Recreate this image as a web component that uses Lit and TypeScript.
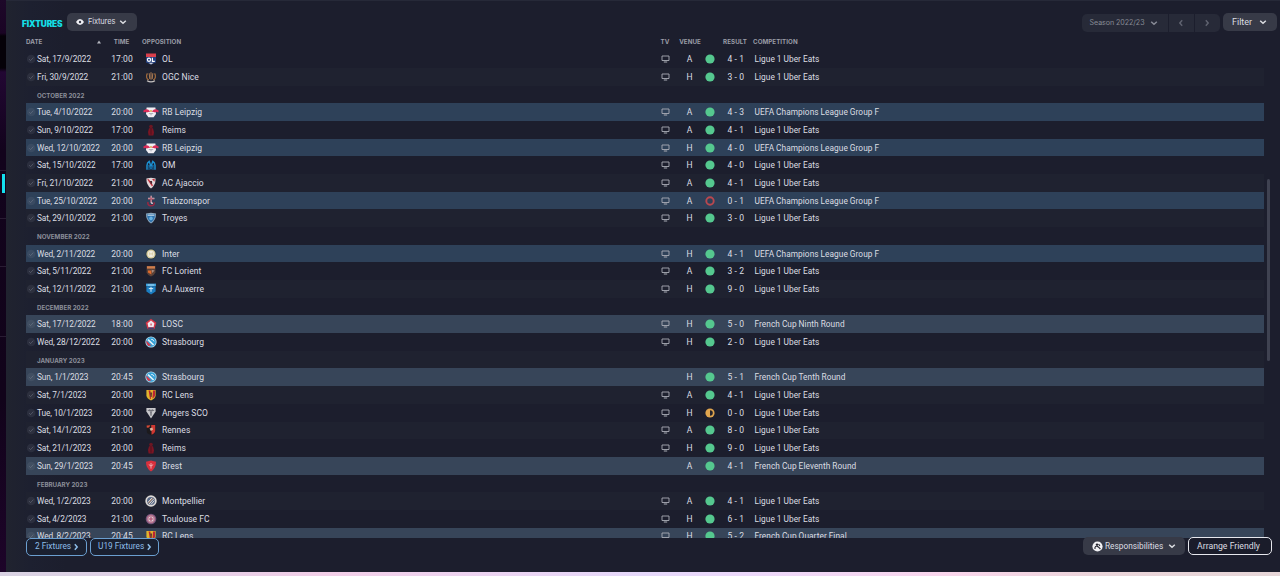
import { LitElement, html, css, svg, TemplateResult, SVGTemplateResult } from "lit";
import { customElement, property } from "lit/decorators.js";
import { classMap } from "lit/directives/class-map.js";

type Outcome = "win" | "loss" | "draw";
type Kind = "league" | "europe" | "cup";

interface Fixture {
  date: string;
  time: string;
  team: string;
  tv: boolean;
  venue: "A" | "H";
  outcome: Outcome;
  result: string;
  competition: string;
  kind: Kind;
}

interface Month {
  month: string;
}

const league = (
  date: string,
  time: string,
  team: string,
  venue: "A" | "H",
  result: string,
  outcome: Outcome = "win",
): Fixture => ({
  date, time, team, venue, result, outcome, tv: true, competition: "Ligue 1 Uber Eats", kind: "league",
});

const europe = (
  date: string,
  team: string,
  venue: "A" | "H",
  result: string,
  outcome: Outcome = "win",
): Fixture => ({
  date, time: "20:00", team, venue, result, outcome, tv: true,
  competition: "UEFA Champions League Group F", kind: "europe",
});

const cup = (
  date: string,
  time: string,
  team: string,
  venue: "A" | "H",
  result: string,
  round: string,
  tv: boolean,
): Fixture => ({
  date, time, team, venue, result, outcome: "win", tv, competition: `French Cup ${round}`, kind: "cup",
});

const ROWS: (Fixture | Month)[] = [
  league("Sat, 17/9/2022", "17:00", "OL", "A", "4 - 1"),
  league("Fri, 30/9/2022", "21:00", "OGC Nice", "H", "3 - 0"),
  { month: "October 2022" },
  europe("Tue, 4/10/2022", "RB Leipzig", "A", "4 - 3"),
  league("Sun, 9/10/2022", "17:00", "Reims", "A", "4 - 1"),
  europe("Wed, 12/10/2022", "RB Leipzig", "H", "4 - 0"),
  league("Sat, 15/10/2022", "17:00", "OM", "H", "4 - 0"),
  league("Fri, 21/10/2022", "21:00", "AC Ajaccio", "A", "4 - 1"),
  europe("Tue, 25/10/2022", "Trabzonspor", "A", "0 - 1", "loss"),
  league("Sat, 29/10/2022", "21:00", "Troyes", "H", "3 - 0"),
  { month: "November 2022" },
  europe("Wed, 2/11/2022", "Inter", "H", "4 - 1"),
  league("Sat, 5/11/2022", "21:00", "FC Lorient", "A", "3 - 2"),
  league("Sat, 12/11/2022", "21:00", "AJ Auxerre", "H", "9 - 0"),
  { month: "December 2022" },
  cup("Sat, 17/12/2022", "18:00", "LOSC", "H", "5 - 0", "Ninth Round", true),
  league("Wed, 28/12/2022", "20:00", "Strasbourg", "H", "2 - 0"),
  { month: "January 2023" },
  cup("Sun, 1/1/2023", "20:45", "Strasbourg", "H", "5 - 1", "Tenth Round", false),
  league("Sat, 7/1/2023", "20:00", "RC Lens", "A", "4 - 1"),
  league("Tue, 10/1/2023", "20:00", "Angers SCO", "H", "0 - 0", "draw"),
  league("Sat, 14/1/2023", "21:00", "Rennes", "A", "8 - 0"),
  league("Sat, 21/1/2023", "20:00", "Reims", "H", "9 - 0"),
  cup("Sun, 29/1/2023", "20:45", "Brest", "A", "4 - 1", "Eleventh Round", false),
  { month: "February 2023" },
  league("Wed, 1/2/2023", "20:00", "Montpellier", "A", "4 - 1"),
  league("Sat, 4/2/2023", "21:00", "Toulouse FC", "H", "6 - 1"),
  cup("Wed, 8/2/2023", "20:45", "RC Lens", "H", "5 - 2", "Quarter Final", true),
];

// Club badges on a 16x12 grid
const BADGES: Record<string, SVGTemplateResult> = {
  OL: svg`
    <path d="M3 .5h10v3.6H3z" fill="#d9404c"/>
    <path d="M3 4.1h10v5.500L8 11.6 3 9.600z" fill="#24407e"/>
    <circle cx="6" cy="6.800" r="1.600" fill="none" stroke="#fff" stroke-width="1.2"/>
    <path d="M9.4 4.8v3.600h2.400" fill="none" stroke="#fff" stroke-width="1.200"/>
    <path d="M5.600 9.8h5L8 11.4z" fill="#c9ccd8"/>`,
  "OGC Nice": svg`
    <path d="M4.400 2.400C2.800 5 3.600 8 5.800 9M11.600 2.400C13.200 5 12.400 8 10.200 9" fill="none" stroke="#a9703f" stroke-width="1.2"/>
    <path d="M6.200 2.200 6.800 8M8 1.200v7.500M9.800 2.200 9.200 8" stroke="#b98557" stroke-width=".9"/>
    <path d="M4 9.700q4 2.400 8 0" fill="none" stroke="#c6c3c2" stroke-width="1.1"/>`,
  "RB Leipzig": svg`
    <path d="M3.600 1.600h8.800l.6 6.400L10.600 11.200H5.400L3 8z" fill="#f1eff4"/>
    <path d="M.2 4.800 2.600 3.200l2.400.4 2.400 1.800-2 .5-1.600.6-1.400-.8-1.600.9zM15.800 4.800 13.400 3.200l-2.400.4-2.400 1.800 2 .5 1.600.6 1.400-.8 1.600.9z" fill="#dc2b58"/>
    <circle cx="8" cy="5" r=".9" fill="#dba53c"/>
    <path d="M5.800 7.600h4.400M8 7.600v1.800" stroke="#9a9ca8" stroke-width=".8"/>`,
  Reims: svg`
    <circle cx="8" cy="2.600" r="1.800" fill="#6b1723"/>
    <path d="M6 4.200h4l1 4-.6 3.400H5.600L5 8z" fill="#7a1523"/>
    <path d="M8 4.600v6" stroke="#4c131f" stroke-width="1"/>`,
  OM: svg`
    <path d="M4 10.800V6.200Q4.200 3.600 6.200 2.400l1.800 5 1.800-5Q11.800 3.600 12 6.200v4.600" fill="none" stroke="#1b8fd0" stroke-width="1.500"/>
    <path d="M6 11V6l2 4.400L10 6v5" fill="none" stroke="#1673af" stroke-width="1"/>`,
  "AC Ajaccio": svg`
    <path d="M3.400 1.600 8 .8l4.600.8Q12.700 8.400 8 11.500 3.300 8.400 3.400 1.600z" fill="#e3d6d8"/>
    <path d="M4.200 2.200h1.600l4.200 6-1 1.400zM9 2h2.800l-.4 2.800z" fill="#c4303d"/>
    <path d="M6.800 4 9 4l.2 2.200L8 7.200z" fill="#4b2930"/>`,
  Trabzonspor: svg`
    <path d="M5 3.600h6.400M8.200.8v6q0 1.600 1.700 1.500" fill="none" stroke="#d7c8d2" stroke-width="1.500"/>
    <path d="M5 4h6M8 1.200v6" stroke="#a72c43" stroke-width=".8"/>
    <path d="M5 7q-.8 3.600 3 3.800 3.600 0 3.200-3.400" fill="none" stroke="#9d2742" stroke-width="1.500"/>`,
  Troyes: svg`
    <path d="M3 1.500 8 .7l5 .8Q13.200 8.400 8 11.500 2.800 8.400 3 1.500z" fill="#8aa6bd"/>
    <path d="M4 2.300h8Q12 7.800 8 10.400 4 7.800 4 2.300z" fill="#2f74b0"/>
    <path d="M4.600 3.200h6.800" stroke="#dce6ee" stroke-width="1"/>
    <circle cx="8" cy="6.400" r="1.800" fill="#69b3e2"/>`,
  Inter: svg`
    <circle cx="8" cy="6" r="5.400" fill="#293c46"/>
    <circle cx="8" cy="6" r="4.600" fill="#d7cb9b"/>
    <circle cx="8" cy="6" r="3.200" fill="#f0ecdf"/>
    <path d="M6.400 7.400v-2.800l1.600 1.900 1.600-1.900v2.800" fill="none" stroke="#d2c48c" stroke-width=".6"/>`,
  "FC Lorient": svg`
    <path d="M3.600 1h8.800v6.400Q11.500 10 8 11.400 4.500 10 3.600 7.400z" fill="#5a4137"/>
    <path d="M4 1.200h8v2.400H4z" fill="#cf7d4c"/>
    <path d="M5 5.400h3.400v4L5 7.400z" fill="#e06a2c"/>
    <path d="M8.600 4.800 11.600 5.400 9.200 8z" fill="#a58b80"/>`,
  "AJ Auxerre": svg`
    <path d="M3 .6h10v2.600H3z" fill="#3aa0dc"/>
    <path d="M3.400 3.200h9.200v5.200L8 11.500 3.400 8.400z" fill="#1b7dc0"/>
    <path d="M4.600 2h6.800" stroke="#bfe2f4" stroke-width=".9"/>
    <path d="M8 3.800v5M5.800 5.600h4.400" stroke="#d8edf8" stroke-width="1"/>`,
  LOSC: svg`
    <path d="m8 .7 5.400 4.100-2 6.400H4.600l-2-6.400z" fill="#d63547"/>
    <path d="m8 2.600 3.400 2.600-.8 4H5.400l-.8-4z" fill="#f0e8ee"/>
    <path d="M5.400 9.600h5.200l.4 1.400H5z" fill="#43406f"/>
    <path d="M7.300 5.400h1.600v2H7.300z" fill="#d96a76"/>`,
  Strasbourg: svg`
    <circle cx="8" cy="6" r="5.600" fill="#bcdcec"/>
    <circle cx="8" cy="6" r="4.800" fill="#35a0d6"/>
    <path d="M5 3.600 10.600 9" stroke="#e8f3f9" stroke-width="1.500"/>
    <path d="M3.400 4.400 8.200 9.400l-2.600.6Q3 8 3.400 4.400z" fill="#d53a4c"/>
    <path d="M8.200 3.400q2-.4 2.800 2" fill="none" stroke="#d7eef8" stroke-width="1"/>`,
  "RC Lens": svg`
    <path d="M3.400 1h9.200v5.800Q12 9.800 8 11.500 4 9.800 3.400 6.800z" fill="#e2b52d"/>
    <path d="M5.600 1.600h1.800l.6 8.600-1-.4zM10 1.600h2v4.800q0 1.600-2.600 3.200z" fill="#bd2533"/>
    <path d="M7.200 3.400h1.800L8.600 8H7.600z" fill="#54302a"/>`,
  "Angers SCO": svg`
    <path d="M3.400 1h9.200v3.600L8 11.600 3.400 4.600z" fill="#c8c8cc"/>
    <path d="M4.800 3.400h6.400" stroke="#4a4a53" stroke-width=".7"/>
    <path d="M6.600 2.200 8.400 8.600M9.400 2.200 7.600 8.600" stroke="#6a6a72" stroke-width=".8"/>`,
  Rennes: svg`
    <path d="M3.600 1.200 12.400.8v6Q12 10 8.400 11.400L4 9z" fill="#1c1a1d"/>
    <path d="M8.200 1h4v5.600Q12 9.600 8.600 10.800z" fill="#cf3832"/>
    <path d="M3.600 1.600 7.400 1.200 6 3.400l-2.200.4z" fill="#d44b38"/>
    <path d="M6.600 4.600 9.400 3.600l.6 2.200-2.200 1.200z" fill="#dcb49c"/>`,
  Brest: svg`
    <path d="M3 1.800 8 .6l5 1.200Q13.100 8.400 8 11.500 2.900 8.400 3 1.800z" fill="#d8303d"/>
    <path d="M8 3v5.600M5.800 4.600 8 6l2.200-1.400" fill="none" stroke="#f3b4ba" stroke-width=".9"/>`,
  Montpellier: svg`
    <circle cx="8" cy="6" r="5.700" fill="#dcd9d6"/>
    <circle cx="8" cy="6" r="4" fill="#5b6a86"/>
    <path d="M4.800 7.600 9 2.800M6 9 10.800 3.800M7.800 9.600l3.600-4" stroke="#e9e4df" stroke-width=".9"/>
    <path d="M5.400 8.200 9.800 3.300" stroke="#c98a55" stroke-width=".7"/>`,
  "Toulouse FC": svg`
    <circle cx="8" cy="6" r="5.300" fill="#74537a"/>
    <circle cx="8" cy="6" r="4.200" fill="#b8758f"/>
    <circle cx="8" cy="6" r="2.600" fill="#ded0da"/>
    <path d="M8 3.800v4.400M5.800 6h4.400" stroke="#b0466a" stroke-width="1.100"/>`,
};

const chevron = (points: string, size = 8): TemplateResult => html`
  <svg class="chevron" width=${size} height=${size} viewBox="0 0 8 8">
    <path d=${points} fill="none" stroke="currentColor" stroke-width="1.5" />
  </svg>
`;

const DOWN = "M1.200 2.800 4 5.300 6.800 2.800";
const LEFT = "M5.200 1.200 2.800 4 5.200 6.800";
const RIGHT = "M2.800 1.200 5.200 4 2.800 6.800";

@customElement("fixture-row")
export class FixtureRow extends LitElement {
  static styles = css`
    :host {
      display: block;
    }

    .row {
      display: grid;
      grid-template-columns: var(--fixture-columns);
      align-items: center;
      height: 100%;
      color: #dcdee3;
      font-size: 8.5px;
      letter-spacing: 0.06px;
      white-space: pre;
    }

    .europe {
      background: #2e4159;
    }

    .cup {
      background: #374559;
    }

    .center {
      text-align: center;
    }

    svg {
      display: block;
    }

    .tv,
    .dot {
      margin: 0 auto;
    }

    .badge {
      margin-left: 6px;
    }

    .date {
      font-size: 8.300px;
      letter-spacing: -0.08px;
      word-spacing: -0.2px;
    }

    .competition {
      font-size: 8.300px;
      letter-spacing: 0.06px;
      word-spacing: -0.2px;
    }

    .result {
      letter-spacing: 0.12px;
    }
  `;

  @property({ attribute: false }) fixture!: Fixture;

  private renderDot(outcome: Outcome) {
    switch (outcome) {
      case "win":
        return svg`<circle cx="5" cy="5" r="4.600" fill="#55c88f" />`;
      case "loss":
        return svg`<circle cx="5" cy="5" r="3.700" fill="none" stroke="#b9484f" stroke-width="1.900" />`;
      case "draw":
        return svg`
          <circle cx="5" cy="5" r="4.600" fill="#e0a54e" />
          <path d="M5 2.200a2.800 2.800 0 0 1 0 5.600z" fill="#26242c" />`;
    }
  }

  render() {
    const f = this.fixture;
    return html`
      <div class=${classMap({ row: true, [f.kind]: true })}>
        <svg width="10" height="10" viewBox="0 0 10 10">
          <circle cx="5.200" cy="5" r="4.300" fill="#8d95a5" fill-opacity=".13" />
          <path d="M3.200 5.200 4.600 6.600 7.300 3.600" fill="none" stroke="#858d9c" stroke-opacity=".4" />
        </svg>
        <span class="date">${f.date}</span>
        <span class="center">${f.time}</span>
        <svg class="badge" width="16" height="12" viewBox="0 0 16 12">${BADGES[f.team]}</svg>
        <span>${f.team}</span>
        ${f.tv
          ? html`<svg class="tv" width="9" height="8" viewBox="0 0 9 8">
              <path d="M1 1h7v4.500H1z" fill="none" stroke="#a9acb5" stroke-width=".9" />
              <path d="M2.800 7h3.400" stroke="#a9acb5" />
            </svg>`
          : html`<span></span>`}
        <span class="center">${f.venue}</span>
        <svg class="dot" width="10" height="10" viewBox="0 0 10 10">${this.renderDot(f.outcome)}</svg>
        <span class="center result">${f.result}</span>
        <span class="competition">${f.competition}</span>
      </div>
    `;
  }
}

@customElement("app-root")
export class AppRoot extends LitElement {
  static styles = css`
    :host {
      --fixture-columns: 11px 70px 30px 25px 492px 22px 27px 14px 37.5px 1fr;
      display: flex;
      flex-direction: column;
      height: 576px;
      overflow: hidden;
      background: #1c1e2d;
      color: #d3d5db;
      font-family: Roboto, "Liberation Sans", sans-serif;
      font-size: 9px;
    }

    .main {
      display: flex;
      flex: 1;
      min-height: 0;
    }

    .nav {
      display: flex;
      flex-direction: column;
      width: 6px;
      background: linear-gradient(#1d0829, #1a0424 33px, #050108 36px, #050108 68px, #220733 72px, #12031c 150px, #11031a 400px, #1d0429);
    }

    .nav div {
      box-sizing: border-box;
      height: 48px;
      border-bottom: 1px solid #291c33;
    }

    .nav .top {
      height: 171px;
    }

    .nav .tall {
      height: 70px;
    }

    .nav .active {
      padding: 3px 1px 0 2px;
    }

    .nav .active::before {
      content: "";
      display: block;
      height: 19px;
      background: #14dfee;
    }

    .panel {
      display: flex;
      flex: 1;
      flex-direction: column;
      min-width: 0;
      border-top: 1px solid #262938;
      background: linear-gradient(90deg, #20232f, #1d2030 24px, #1c1e2d 60px);
    }

    .toolbar {
      display: flex;
      align-items: flex-start;
      height: 35px;
      box-sizing: border-box;
      padding: 12px 3px 0 16px;
    }

    h1 {
      margin: 0 4px 0 0;
      width: 41px;
      color: #14e0e8;
      font: 900 8.300px/22px Inter, sans-serif;
      letter-spacing: -0.1px;
    }

    button {
      display: flex;
      align-items: center;
      box-sizing: border-box;
      height: 18px;
      padding: 0 9px;
      border: 0;
      border-radius: 5px;
      background: #373a47;
      color: #dcdde2;
      font: 8.600px/16px Roboto, sans-serif;
      white-space: nowrap;
    }

    button svg {
      flex: none;
    }

    .view {
      width: 70px;
      gap: 4px;
      font: 7.500px/18px Inter, sans-serif;
      letter-spacing: -0.15px;
    }

    .season {
      display: flex;
      gap: 1px;
      margin: 1px 3px 0 auto;
      border-radius: 5px;
      overflow: hidden;
    }

    .season button {
      justify-content: center;
      width: 25px;
      padding: 0 2px 0 0;
      border-radius: 0;
      background: #272a38;
      color: #5f626f;
    }

    .season .label {
      width: 86px;
      padding: 0 2px 0 0;
      gap: 6px;
      color: #888b96;
      font: 7.100px/18px Inter, sans-serif;
      letter-spacing: -0.05px;
    }

    .filter {
      width: 54px;
      justify-content: space-between;
      padding: 0 10px 1px 9px;
      font-size: 9px;
    }

    .columns {
      display: grid;
      grid-template-columns: 68px 12px 31px 5px 512px 22px 28px 13px 36px 1fr;
      align-items: center;
      box-sizing: border-box;
      height: 14px;
      padding: 0 0 2px 20px;
      color: #9a9ca6;
      font: 700 6.200px/12px Inter, sans-serif;
      letter-spacing: 0.05px;
    }

    .columns .center {
      text-align: center;
    }

    .body {
      display: flex;
      flex: 1;
      min-height: 0;
    }

    .list {
      width: 1238px;
      height: 488px;
      margin-left: 20px;
      padding-top: 0.4px;
      box-sizing: border-box;
      overflow: hidden;
    }

    .list > * {
      display: block;
      height: 17.680px;
    }

    .odd {
      background: #1f2230;
    }

    .month {
      box-sizing: border-box;
      padding-left: 11px;
      color: #8b8e99;
      font: 700 6.200px/19px Inter, sans-serif;
      text-transform: uppercase;
    }

    .scroll {
      width: 3px;
      height: 182px;
      margin: 129px 0 0 3px;
      border-radius: 2px;
      background: #3f4251;
    }

    .footer {
      display: flex;
      gap: 3px;
      height: 34px;
      padding: 0 8px 0 20px;
    }

    .link {
      width: 61px;
      height: 18px;
      padding: 0 0 2px 8px;
      gap: 2px;
      border: 1.500px solid #6b9fd0;
      background: #1a2030;
      color: #8dbde8;
      font-size: 8.300px;
    }

    .link .chevron {
      margin: 2px 0 0 -1px;
    }

    .wide {
      width: 69px;
      padding-left: 7px;
    }

    .jobs {
      gap: 2px;
      width: 102px;
      margin: -1px 0 0 auto;
      padding: 0 7px 0 9px;
      font-size: 8.300px;
    }

    .jobs .chevron {
      margin-left: 3px;
    }

    .arrange {
      justify-content: center;
      width: 84px;
      margin-top: -1px;
      padding: 0 3px 1px 0;
      border: 1.500px solid #e6e7ed;
      background: #1a1c2a;
      font-size: 8.700px;
    }

    .edge {
      height: 4px;
      background: linear-gradient(90deg, #d9d3e3, #e0cfe6 150px, #f3cfe8 330px, #e5d8fa 640px, #ecd8fa 750px, #fad6ec 950px, #ead4d9 1100px, #e6d6d8);
    }
  `;

  private renderRow(row: Fixture | Month, index: number) {
    const classes = classMap({ odd: index % 2 === 1, month: "month" in row });
    return "month" in row
      ? html`<div class=${classes}>${row.month}</div>`
      : html`<fixture-row class=${classes} .fixture=${row}></fixture-row>`;
  }

  render() {
    return html`
      <div class="main">
        <div class="nav">
          <div class="top"></div>
          <div class="active"></div>
          <div></div>
          <div class="tall"></div>
        </div>
        <div class="panel">
          <div class="toolbar">
            <h1>FIXTURES</h1>
            <button class="view">
              <svg width="8" height="8" viewBox="0 0 8 8">
                <path d="M0 4q1.600-2.900 4-2.900T8 4Q6.400 6.900 4 6.900T0 4z" fill="#f0f0f4" />
                <circle cx="4" cy="4" r="1.200" fill="#373a47" />
              </svg>
              <span>Fixtures</span>
              ${chevron(DOWN)}
            </button>
            <div class="season">
              <button class="label"><span>Season 2022/23</span>${chevron(DOWN)}</button>
              <button>${chevron(LEFT)}</button>
              <button>${chevron(RIGHT)}</button>
            </div>
            <button class="filter"><span>Filter</span>${chevron(DOWN)}</button>
          </div>
          <div class="columns">
            <span>DATE</span>
            <svg width="10" height="6" viewBox="0 0 10 6"><path d="M5 1.500 7 4.500H3z" fill="#b4b6be" /></svg>
            <span class="center">TIME</span>
            <span></span>
            <span>OPPOSITION</span>
            <span class="center">TV</span>
            <span class="center">VENUE</span>
            <span></span>
            <span class="center">RESULT</span>
            <span>COMPETITION</span>
          </div>
          <div class="body">
            <div class="list">${ROWS.map((row, i) => this.renderRow(row, i))}</div>
            <div class="scroll"></div>
          </div>
          <div class="footer">
            <button class="link"><span>2 Fixtures</span>${chevron(RIGHT)}</button>
            <button class="link wide"><span>U19 Fixtures</span>${chevron(RIGHT)}</button>
            <button class="jobs">
              <svg width="11" height="11" viewBox="0 0 11 11">
                <circle cx="5.500" cy="5.500" r="5.100" fill="#f2f2f5" />
                <circle cx="5" cy="3.600" r="1.200" fill="#23242f" />
                <path d="M3 8V6.400Q3.400 5 5 5l1.600 1.200L8.400 8M6.600 3.200 8 5" fill="none" stroke="#23242f" stroke-width="1.100" />
              </svg>
              <span>Responsibilities</span>
              ${chevron(DOWN)}
            </button>
            <button class="arrange">Arrange Friendly</button>
          </div>
        </div>
      </div>
      <div class="edge"></div>
    `;
  }
}
